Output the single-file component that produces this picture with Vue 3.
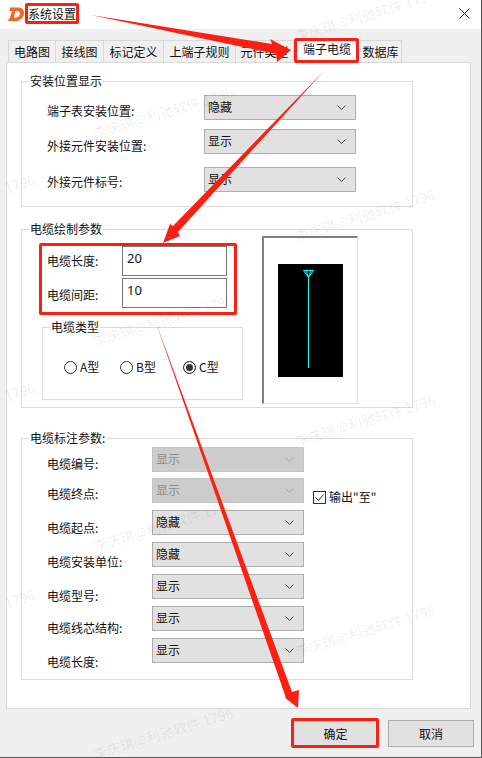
<script setup>
const tabs = [
  { t: '电路图', w: 48 }, { t: '接线图', w: 48 }, { t: '标记定义', w: 60 }, { t: '上端子规则', w: 72 },
  { t: '元件类型', w: 58 }, { t: '端子电缆', w: 66, active: true }, { t: '数据库', w: 42 }
]
const g1 = [
  { l: '端子表安装位置:', v: '隐藏', h: 34, m: 8 },
  { l: '外接元件安装位置:', v: '显示', h: 38, m: 9 },
  { l: '外接元件标号:', v: '显示', h: 34, m: 7 }
]
const inputs = [
  { l: '电缆长度:', v: '20', m: 7 },
  { l: '电缆间距:', v: '10', m: 9 }
]
const g3 = [
  { l: '电缆编号:', v: '显示', off: true, gap: 31, m: 9 },
  { l: '电缆终点:', v: '显示', off: true, gap: 32, m: 8 },
  { l: '电缆起点:', v: '隐藏', gap: 32, m: 10 },
  { l: '电缆安装单位:', v: '隐藏', gap: 32, m: 12 },
  { l: '电缆型号:', v: '显示', gap: 32, m: 14 },
  { l: '电缆线芯结构:', v: '显示', gap: 32, m: 14 },
  { l: '电缆长度:', v: '显示', gap: 25, m: 16 }
]
const marks = [
  [-35, 200], [-35, 408], [-35, 615],
  [163, 112], [163, 320], [163, 525], [163, 733],
  [365, 15], [365, 215], [365, 420], [365, 630]
]
</script>

<template>
  <div class="win">
    <header class="title">
      <svg class="logo" width="18" height="16" viewBox="0 0 18 16">
        <path d="M3 1.500h8c4.500 0 6.500 2.600 6 6.200C16.400 12 13 15 8.500 15H0c1.500-.8 2.600-2 3-3.500L5 5h3.500L7 10.500c-.2.800.2 1.200 1 1.200 2.500 0 4.500-1.600 4.900-3.800.3-1.900-.6-3-2.900-3H2.200C2.600 4 3 2.800 3 1.500z" fill="#f26a21"/>
      </svg>
      <span class="title-text">系统设置</span>
      <svg class="close" width="11" height="11" viewBox="0 0 11 11"><path d="M.5.500l10 10M10.500.500l-10 10" stroke="#222" stroke-width="1" fill="none"/></svg>
    </header>

    <main class="body">
      <nav class="tabs">
        <div v-for="tab in tabs" :key="tab.t" class="tab" :class="{ active: tab.active }" :style="{ width: tab.w + 'px' }">{{ tab.t }}</div>
      </nav>

      <section class="panel">
        <fieldset class="group g1">
          <legend>安装位置显示</legend>
          <div v-for="r in g1" :key="r.l" class="row" :style="{ height: r.h + 'px' }">
            <span class="lab lab1" :style="{ marginTop: r.m + 'px' }">{{ r.l }}</span>
            <div class="sel"><span>{{ r.v }}</span><svg width="9" height="5" viewBox="0 0 9 5"><path d="M.5.500l4 4 4-4" fill="none" stroke="#444"/></svg></div>
          </div>
        </fieldset>

        <fieldset class="group g2">
          <legend>电缆绘制参数</legend>
          <div class="g2-main">
            <div class="g2-left">
              <div v-for="r in inputs" :key="r.l" class="inrow">
                <span class="lab lab2" :style="{ marginTop: r.m + 'px' }">{{ r.l }}</span>
                <div class="input">{{ r.v }}</div>
              </div>
              <fieldset class="group inner">
                <legend>电缆类型</legend>
                <div class="radios">
                  <span class="radio"><i></i>A型</span>
                  <span class="radio"><i></i>B型</span>
                  <span class="radio on"><i></i>C型</span>
                </div>
              </fieldset>
            </div>
            <div class="preview">
              <div class="canvas">
                <svg width="65" height="113" viewBox="0 0 65 113">
                  <path d="M25.500 6.500h10l-5 7zM30.500 13v91M28 6.500l2.500 7M33 6.500l-2.500 7" fill="none" stroke="#0ff" stroke-width="1"/>
                </svg>
              </div>
            </div>
          </div>
        </fieldset>

        <div class="g3-wrap">
          <fieldset class="group g3">
            <legend>电缆标注参数:</legend>
            <div v-for="r in g3" :key="r.l" class="row r3" :style="{ height: r.gap + 'px' }">
              <span class="lab lab3" :style="{ marginTop: r.m + 'px' }">{{ r.l }}</span>
              <div class="sel" :class="{ off: r.off }"><span>{{ r.v }}</span><svg width="9" height="5" viewBox="0 0 9 5"><path d="M.5.500l4 4 4-4" fill="none" :stroke="r.off ? '#aaa' : '#444'"/></svg></div>
            </div>
            <label class="check">
              <svg width="13" height="13" viewBox="0 0 13 13"><rect x=".5" y=".5" width="12" height="12" fill="#fff" stroke="#333"/><path d="M2.500 6.500l3 3 5-6" fill="none" stroke="#333"/></svg>
              <span>输出"至"</span>
            </label>
          </fieldset>
        </div>
      </section>

      <footer class="foot">
        <div class="btn primary">确定</div>
        <div class="btn wide">取消</div>
      </footer>
    </main>

    <div class="mark" v-for="m in marks" :key="m.join()" :style="{ left: m[0] + 'px', top: m[1] + 'px' }">李庆琪@利驰软件 1796</div>

    <div class="hl" style="left:25px;top:3px;width:54px;height:21px"></div>
    <div class="hl" style="left:294px;top:38px;width:65px;height:25px"></div>
    <div class="hl" style="left:39px;top:243px;width:198px;height:72px"></div>
    <div class="hl" style="left:291px;top:718px;width:88px;height:30px"></div>

    <svg class="arrows" width="482" height="758" viewBox="0 0 482 758">
      <path d="M91 15L272 44 270 39 291 50 277 62 276 54z" fill="#fc1f12"/>
      <path d="M324 71L178 232 180 236 163 243 170 224 173 226z" fill="#fc1f12"/>
      <path d="M155 320L292 692 299 690 298 708 284 697 286 698z" fill="#fc1f12"/>
    </svg>
  </div>
</template>

<style>
html, body { margin: 0; background: #f0f0f0; }
</style>

<style scoped>
.win {
  position: relative;
  width: 482px;
  height: 758px;
  overflow: hidden;
  background: #f0f0f0;
  font: 12px/16px "Noto Sans CJK SC", "Liberation Sans", sans-serif;
  color: #111;
  box-sizing: border-box;
  border-right: 1px solid #555;
  border-bottom: 1px solid #555;
}
.title {
  height: 29px;
  background: #fff;
  display: flex;
  align-items: center;
  padding-left: 7px;
}
.logo { margin-top: -1px; }
.title-text { margin-left: 3px; margin-top: -1px; }
.close { margin-left: auto; margin-right: 11px; margin-top: -3px; }
.body { padding: 11px 0 0 6px; }
.tabs { display: flex; height: 22px; padding-left: 2px; }
.tab {
  box-sizing: border-box;
  border: 1px solid #d9d9d9;
  border-bottom: 0;
  border-left-width: 0;
  background: #f0f0f0;
  text-align: center;
  line-height: 22px;
}
.tab:first-child { border-left-width: 1px; }
.tab.active { background: #fff; margin-top: -2px; height: 24px; border: 0; }
.panel {
  box-sizing: border-box;
  width: 465px;
  height: 647px;
  background: #fff;
  border: 1px solid #d9d9d9;
  padding-top: 10px;
}
.group {
  margin: 0 0 0 14px;
  padding: 0;
  box-sizing: border-box;
  border: 1px solid #dcdcdc;
  width: 392px;
  min-width: 0;
}
legend { padding: 0 1px; margin-left: 7px; line-height: 16px; }
.g1 { height: 134px; padding-top: 6px; }
.row { display: flex; align-items: flex-start; }
.lab { display: block; white-space: nowrap; }
.lab1 { width: 157px; padding-left: 25px; }
.sel {
  box-sizing: border-box;
  width: 152px;
  height: 25px;
  background: #e1e1e1;
  border: 1px solid #adadad;
  display: flex;
  align-items: center;
  justify-content: space-between;
  padding: 0 9px 2px 3px;
  flex: none;
}
.sel svg { margin-top: 2px; }
.sel.off { background: #ccc; border-color: #c4c4c4; color: #8f8f8f; }
.g2 { margin-top: 14px; height: 187px; }
.g2-main { display: flex; margin-top: -3px; }
.g2-left { width: 240px; padding-top: 12px; }
.inrow { display: flex; height: 32px; }
.lab2 { width: 75px; padding-left: 25px; flex: none; }
.input {
  box-sizing: border-box;
  width: 105px;
  height: 30px;
  border: 1px solid #7a7a7a;
  background: #fff;
  padding: 3px 4px;
  font-size: 13px;
  font-family: "Noto Sans", sans-serif;
}
.inner { width: 201px; height: 81px; margin: 9px 0 0 20px; }
.radios { display: flex; padding: 24px 0 0 21px; }
.radio { display: flex; align-items: center; gap: 3px; width: 56px; }
.radio:nth-child(3) { margin-left: 7px; }
.radio i {
  box-sizing: border-box;
  width: 13px;
  height: 13px;
  border: 1px solid #333;
  border-radius: 50%;
  background: #fff;
}
.radio.on i { background: #333; box-shadow: inset 0 0 0 2px #fff; }
.preview {
  box-sizing: border-box;
  width: 96px;
  height: 168px;
  margin-top: 2px;
  background: #fff;
  border: 1px solid #e3e3e3;
  border-top: 2px solid #808080;
  border-left: 2px solid #808080;
  padding: 26px 0 0 14px;
}
.canvas { width: 65px; height: 113px; background: #000; line-height: 0; }
.g3-wrap { padding-top: 22px; }
.g3 { position: relative; height: 250px; padding-top: 1px; }
.r3 .lab3 { width: 105px; padding-left: 25px; flex: none; }
.check {
  position: absolute;
  left: 291px;
  top: 43px;
  display: flex;
  align-items: center;
  gap: 3px;
}
.foot { display: flex; gap: 10px; padding: 11px 0 0 287px; }
.btn {
  box-sizing: border-box;
  width: 85px;
  height: 27px;
  border: 1px solid #adadad;
  background: #e1e1e1;
  text-align: center;
  line-height: 25px;
}
.btn.wide { width: 86px; }
.btn.primary { border: 1px solid #0078d7; }
.mark {
  position: absolute;
  width: 150px;
  margin-left: -75px;
  margin-top: -10px;
  text-align: center;
  transform: rotate(-17deg);
  font-size: 14px;
  line-height: 20px;
  white-space: nowrap;
  color: rgba(0, 0, 0, 0.075);
  pointer-events: none;
}
.hl {
  position: absolute;
  box-sizing: border-box;
  border: 3px solid #fc1f12;
  border-radius: 2px;
}
.arrows { position: absolute; left: 0; top: 0; pointer-events: none; }
</style>
